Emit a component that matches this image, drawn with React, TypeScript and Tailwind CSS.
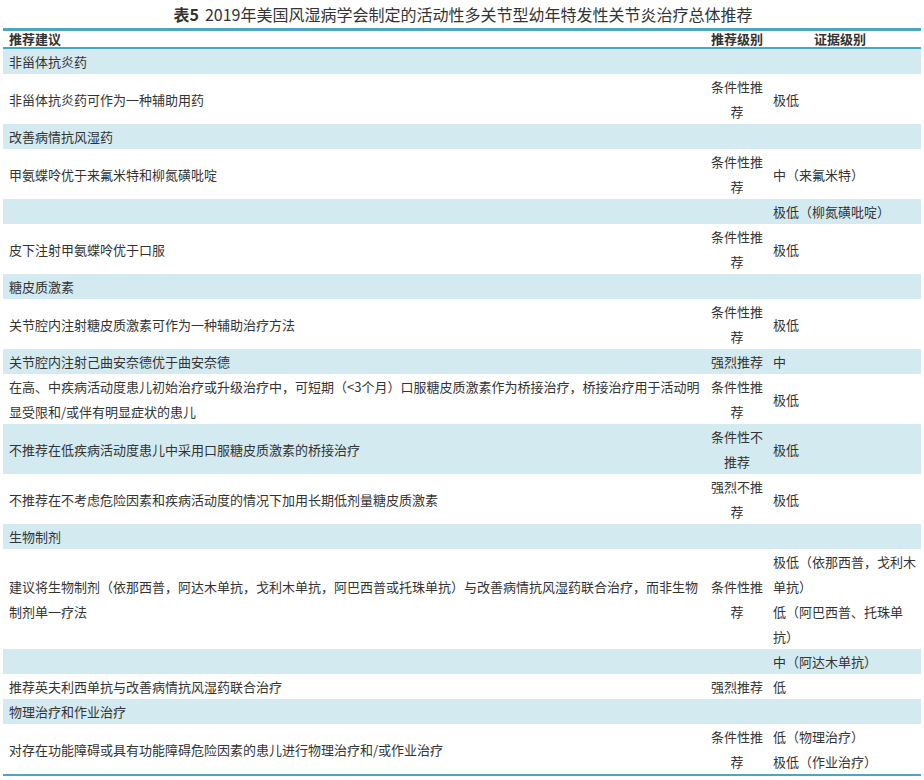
const rows: [string, string, string[], boolean][] = [
  ["非甾体抗炎药", "", [], true],
  ["非甾体抗炎药可作为一种辅助用药", "条件性推荐", ["极低"], false],
  ["改善病情抗风湿药", "", [], true],
  ["甲氨蝶呤优于来氟米特和柳氮磺吡啶", "条件性推荐", ["中（来氟米特）"], false],
  ["", "", ["极低（柳氮磺吡啶）"], true],
  ["皮下注射甲氨蝶呤优于口服", "条件性推荐", ["极低"], false],
  ["糖皮质激素", "", [], true],
  ["关节腔内注射糖皮质激素可作为一种辅助治疗方法", "条件性推荐", ["极低"], false],
  ["关节腔内注射己曲安奈德优于曲安奈德", "强烈推荐", ["中"], true],
  ["在高、中疾病活动度患儿初始治疗或升级治疗中，可短期（<3个月）口服糖皮质激素作为桥接治疗，桥接治疗用于活动明显受限和/或伴有明显症状的患儿", "条件性推荐", ["极低"], false],
  ["不推荐在低疾病活动度患儿中采用口服糖皮质激素的桥接治疗", "条件性不推荐", ["极低"], true],
  ["不推荐在不考虑危险因素和疾病活动度的情况下加用长期低剂量糖皮质激素", "强烈不推荐", ["极低"], false],
  ["生物制剂", "", [], true],
  ["建议将生物制剂（依那西普，阿达木单抗，戈利木单抗，阿巴西普或托珠单抗）与改善病情抗风湿药联合治疗，而非生物制剂单一疗法", "条件性推荐", ["极低（依那西普，戈利木单抗）", "低（阿巴西普、托珠单抗）"], false],
  ["", "", ["中（阿达木单抗）"], true],
  ["推荐英夫利西单抗与改善病情抗风湿药联合治疗", "强烈推荐", ["低"], false],
  ["物理治疗和作业治疗", "", [], true],
  ["对存在功能障碍或具有功能障碍危险因素的患儿进行物理治疗和/或作业治疗", "条件性推荐", ["低（物理治疗）", "极低（作业治疗）"], false],
];

export default function App() {
  return (
    <div className="w-[924px] h-[780px] bg-white text-[#333] text-[13px] leading-[25px]" style={{ fontFamily: '"Noto Sans CJK SC", "Liberation Sans", sans-serif' }}>
      <div className="h-[28px] flex items-center justify-center text-[16px] leading-[20px] text-[#333] pl-[2px]">
        <span className="font-bold mr-[6px]">表5</span>2019年美国风湿病学会制定的活动性多关节型幼年特发性关节炎治疗总体推荐
      </div>
      <table className="ml-[3px] w-[918px] border-collapse table-fixed border-t-[3px] border-b-2 border-[#4aa6c4]">
        <colgroup>
          <col className="w-[702px]" />
          <col className="w-[64px]" />
          <col />
        </colgroup>
        <thead>
          <tr className="border-b-2 border-[#4aa6c4] h-[18px]">
            <th className="text-left font-bold pl-[6px] leading-[16px]">推荐建议</th>
            <th className="font-bold leading-[16px]">推荐级别</th>
            <th className="font-bold leading-[16px] text-left pl-[45px]">证据级别</th>
          </tr>
        </thead>
        <tbody>
          {rows.map(([a, b, c, band], i) => (
            <tr key={i} className={band ? "bg-[#d3eaf1]" : "bg-white"}>
              <td className="pl-[6px] pr-0 py-0 align-middle">{a}</td>
              <td className="text-center align-middle px-[5px] py-0">{b}</td>
              <td className="pl-[4px] pr-[4px] align-middle py-0">
                {c.map((t, j) => <div key={j}>{t}</div>)}
              </td>
            </tr>
          ))}
        </tbody>
      </table>
    </div>
  );
}
